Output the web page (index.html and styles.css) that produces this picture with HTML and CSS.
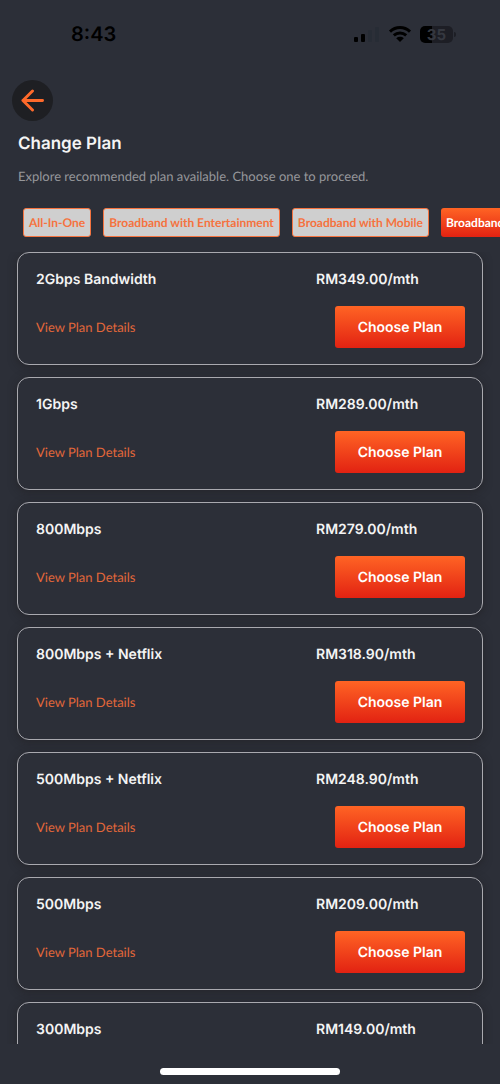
FILE: index.html
```html
<!DOCTYPE html>
<html lang="en">
<head>
<meta charset="utf-8">
<meta name="viewport" content="width=device-width, initial-scale=1">
<title>Change Plan</title>
<link rel="stylesheet" href="styles.css">
</head>
<body>
<div class="screen">
  <div class="status-bar">
    <time class="clock">8:43</time>
    <div class="indicators">
      <svg class="signal" viewBox="0 0 26 17" aria-hidden="true">
        <rect x="0" y="11" width="4" height="5" rx="1"/>
        <rect x="7" y="8" width="4" height="8" rx="1"/>
        <rect class="dim" x="14" y="4" width="4" height="12" rx="1"/>
        <rect class="dim" x="21" y="1" width="4" height="15" rx="1"/>
      </svg>
      <svg class="wifi" viewBox="0 0 24 18" aria-hidden="true">
        <path d="M2 6.6C7.800 1.200 16.200 1.200 22 6.600M5.800 10.400C9.400 7.200 14.600 7.200 18.200 10.400" fill="none" stroke="#000" stroke-width="3"/>
        <path d="M8.200 13.200C10.400 11.400 13.600 11.400 15.800 13.200L12 17Z"/>
      </svg>
      <div class="battery"><span class="battery-level">35</span></div>
    </div>
  </div>

  <header class="header">
    <button class="back" type="button" aria-label="Back">
      <svg viewBox="0 0 24 24" aria-hidden="true"><path d="M22.500 12H2M12 2L2 12L12 22"/></svg>
    </button>
    <h1 class="title">Change Plan</h1>
    <p class="subtitle">Explore recommended plan available. Choose one to proceed.</p>
  </header>

  <nav class="tabs" aria-label="Plan categories">
    <button class="tab" type="button">All-In-One</button>
    <button class="tab" type="button">Broadband with Entertainment</button>
    <button class="tab" type="button">Broadband with Mobile</button>
    <button class="tab tab-active" type="button">Broadband</button>
  </nav>

  <main class="plans">
    <article class="plan">
      <h2 class="plan-name">2Gbps Bandwidth</h2><p class="price">RM349.00/mth</p>
      <a class="details" href="#">View Plan Details</a><button class="choose" type="button">Choose Plan</button>
    </article>
    <article class="plan">
      <h2 class="plan-name">1Gbps</h2><p class="price">RM289.00/mth</p>
      <a class="details" href="#">View Plan Details</a><button class="choose" type="button">Choose Plan</button>
    </article>
    <article class="plan">
      <h2 class="plan-name">800Mbps</h2><p class="price">RM279.00/mth</p>
      <a class="details" href="#">View Plan Details</a><button class="choose" type="button">Choose Plan</button>
    </article>
    <article class="plan">
      <h2 class="plan-name">800Mbps + Netflix</h2><p class="price">RM318.90/mth</p>
      <a class="details" href="#">View Plan Details</a><button class="choose" type="button">Choose Plan</button>
    </article>
    <article class="plan">
      <h2 class="plan-name">500Mbps + Netflix</h2><p class="price">RM248.90/mth</p>
      <a class="details" href="#">View Plan Details</a><button class="choose" type="button">Choose Plan</button>
    </article>
    <article class="plan">
      <h2 class="plan-name">500Mbps</h2><p class="price">RM209.00/mth</p>
      <a class="details" href="#">View Plan Details</a><button class="choose" type="button">Choose Plan</button>
    </article>
    <article class="plan">
      <h2 class="plan-name">300Mbps</h2><p class="price">RM149.00/mth</p>
      <a class="details" href="#">View Plan Details</a><button class="choose" type="button">Choose Plan</button>
    </article>
  </main>

  <footer class="home-area"><div class="home-bar"></div></footer>
</div>
</body>
</html>
```
FILE: styles.css
```css
* { box-sizing: border-box; }

body {
  margin: 0;
  background: #2c2f38;
  color: #f4f4f4;
  font-family: Lato, sans-serif;
  text-rendering: geometricPrecision;
}

h1, h2, p { margin: 0; }

button {
  border: 0;
  cursor: pointer;
  text-rendering: inherit;
}

.screen {
  display: flex;
  flex-direction: column;
  height: 100vh;
  overflow: hidden;
}

/* Status bar */
.status-bar {
  display: flex;
  flex: none;
  align-items: center;
  justify-content: space-between;
  height: 68px;
  padding: 0 44px 0 71px;
  color: #000;
  font-family: Inter, sans-serif;
}

.clock {
  font-size: 20px;
  font-weight: 600;
  line-height: 24px;
}

.indicators {
  display: flex;
  align-items: center;
  gap: 8px;
}

.signal {
  width: 26px;
  height: 17px;
}

.signal .dim { fill: #272c35; }

.wifi {
  width: 24px;
  height: 18px;
}

.battery {
  display: flex;
  align-items: center;
  justify-content: center;
  position: relative;
  width: 33px;
  height: 17px;
  margin-right: 3px;
  border-radius: 5px;
  background: linear-gradient(90deg, #000 35%, #1d1e25 35%);
}

.battery::after {
  content: "";
  position: absolute;
  top: 6px;
  right: -3px;
  width: 2px;
  height: 5px;
  border-radius: 0 2px 2px 0;
  background: #1d1e25;
}

.battery-level {
  color: #353840;
  font-size: 15px;
  font-weight: 700;
  line-height: 17px;
}

/* Page heading */
.header {
  flex: none;
  padding: 12px 18px 0;
}

.back {
  display: flex;
  align-items: center;
  justify-content: center;
  width: 41px;
  height: 41px;
  margin-left: -6px;
  padding: 0;
  border-radius: 50%;
  background: #1e1f23;
}

.back svg {
  width: 23px;
  height: 23px;
  fill: none;
  stroke: #ff6a2b;
  stroke-width: 3;
  stroke-linecap: round;
  stroke-linejoin: round;
}

.title {
  margin-top: 11px;
  font-family: Inter, sans-serif;
  font-size: 17px;
  font-weight: 600;
  line-height: 24px;
}

.subtitle {
  margin-top: 10px;
  color: #96979b;
  font-size: 13px;
  line-height: 20px;
}

/* Category tabs */
.tabs {
  display: flex;
  flex: none;
  gap: 12px;
  padding: 22px 0 15px 23px;
  overflow: hidden;
}

.tab {
  flex: none;
  height: 29px;
  padding: 0 5px;
  border: 1px solid #f5733f;
  border-radius: 3px;
  background: #cfcfcf;
  color: #f5733f;
  font-family: Lato, sans-serif;
  font-size: 12px;
  font-weight: 700;
}

.tab-active {
  border: 0;
  background: linear-gradient(#ff6424, #e22212);
  color: #fff;
}

/* Plan list */
.plans {
  display: flex;
  flex: 1;
  flex-direction: column;
  gap: 12px;
  min-height: 0;
  padding: 0 17px;
  overflow: hidden;
}

.plan {
  display: grid;
  flex: none;
  grid-template-columns: 1fr 149px;
  row-gap: 16px;
  align-items: center;
  padding: 16px 17px 16px 18px;
  border: 1px solid #a9a9af;
  border-radius: 12px;
  background: #2c2f38;
  box-shadow: 0 2px 8px rgba(30, 28, 30, 0.5);
}

.plan-name, .price {
  font-family: Inter, sans-serif;
  font-size: 14px;
  font-weight: 600;
  line-height: 21px;
}

.details {
  justify-self: start;
  color: #e2673a;
  font-size: 13px;
  line-height: 20px;
  text-decoration: none;
}

.choose {
  justify-self: end;
  width: 130px;
  height: 42px;
  padding: 0;
  border-radius: 3px;
  background: linear-gradient(#ff6424, #e22212);
  color: #fff;
  font-family: Inter, sans-serif;
  font-size: 14px;
  font-weight: 600;
}

/* Home indicator */
.home-area {
  display: flex;
  flex: none;
  justify-content: center;
  height: 40px;
  padding-top: 24px;
}

.home-bar {
  width: 36%;
  height: 7px;
  border-radius: 4px;
  background: #fff;
}
```
